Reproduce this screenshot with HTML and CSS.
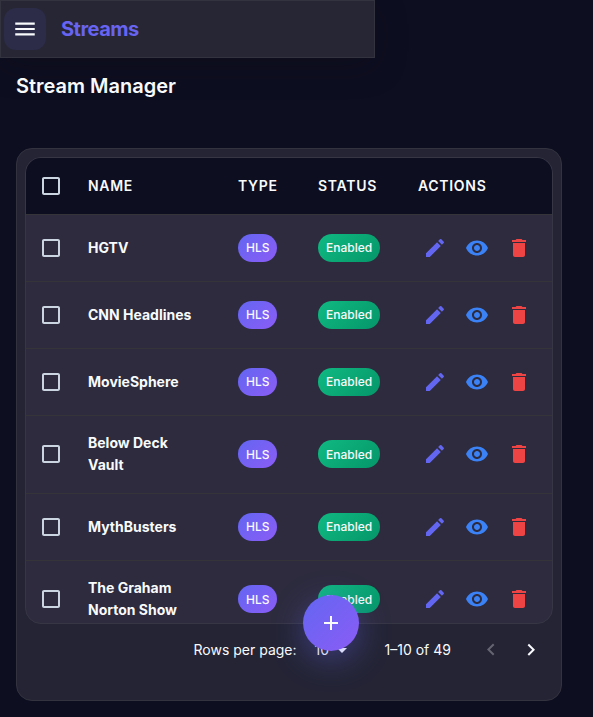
FILE: index.html
```html
<!DOCTYPE html>
<html lang="en">
<head>
<meta charset="utf-8">
<title>Stream Manager</title>
<link rel="stylesheet" href="styles.css">
</head>
<body>
<svg class="defs" aria-hidden="true">
  <symbol id="menu" viewBox="0 0 24 24"><path d="M3 18h18v-2H3zm0-5h18v-2H3zm0-7v2h18V6z"/></symbol>
  <symbol id="box" viewBox="0 0 24 24"><path d="M19 5v14H5V5h14m0-2H5c-1.100 0-2 .9-2 2v14c0 1.100.9 2 2 2h14c1.100 0 2-.9 2-2V5c0-1.100-.9-2-2-2z"/></symbol>
  <symbol id="edit" viewBox="0 0 24 24"><path d="M3 17.250V21h3.750L17.810 9.940l-3.750-3.750zM20.710 7.040c.39-.39.39-1.020 0-1.410l-2.340-2.340a.996.996 0 0 0-1.410 0l-1.830 1.830 3.750 3.750z"/></symbol>
  <symbol id="eye" viewBox="0 0 24 24"><path d="M12 4.500C7 4.500 2.730 7.610 1 12c1.730 4.390 6 7.500 11 7.500s9.270-3.110 11-7.500c-1.730-4.390-6-7.500-11-7.500M12 17c-2.760 0-5-2.240-5-5s2.240-5 5-5 5 2.240 5 5-2.240 5-5 5m0-8c-1.660 0-3 1.340-3 3s1.340 3 3 3 3-1.340 3-3-1.340-3-3-3"/></symbol>
  <symbol id="trash" viewBox="0 0 24 24"><path d="M6 19c0 1.100.9 2 2 2h8c1.100 0 2-.9 2-2V7H6zM19 4h-3.500l-1-1h-5l-1 1H5v2h14z"/></symbol>
  <symbol id="left" viewBox="0 0 24 24"><path d="M15.410 16.090l-4.580-4.590 4.580-4.590L14 5.500l-6 6 6 6z"/></symbol>
  <symbol id="right" viewBox="0 0 24 24"><path d="M8.590 16.340l4.580-4.590-4.580-4.590L10 5.750l6 6-6 6z"/></symbol>
  <symbol id="down" viewBox="0 0 24 24"><path d="M7 10l5 5 5-5z"/></symbol>
  <symbol id="add" viewBox="0 0 24 24"><path d="M19 13h-6v6h-2v-6H5v-2h6V5h2v6h6z"/></symbol>
</svg>
<header class="appbar">
  <button class="menu" aria-label="Menu"><svg class="icon"><use href="#menu"/></svg></button>
  <span class="brand">Streams</span>
</header>
<main>
  <h1>Stream Manager</h1>
  <section class="card">
    <div class="table">
      <div class="row head"><svg class="icon check"><use href="#box"/></svg><span>NAME</span><span>TYPE</span><span>STATUS</span><span>ACTIONS</span></div>
      <div class="row"><svg class="icon check"><use href="#box"/></svg><b>HGTV</b><span class="chip">HLS</span><span class="chip on">Enabled</span><div class="actions"><svg class="icon edit"><use href="#edit"/></svg><svg class="icon eye"><use href="#eye"/></svg><svg class="icon trash"><use href="#trash"/></svg></div></div>
      <div class="row"><svg class="icon check"><use href="#box"/></svg><b>CNN Headlines</b><span class="chip">HLS</span><span class="chip on">Enabled</span><div class="actions"><svg class="icon edit"><use href="#edit"/></svg><svg class="icon eye"><use href="#eye"/></svg><svg class="icon trash"><use href="#trash"/></svg></div></div>
      <div class="row"><svg class="icon check"><use href="#box"/></svg><b>MovieSphere</b><span class="chip">HLS</span><span class="chip on">Enabled</span><div class="actions"><svg class="icon edit"><use href="#edit"/></svg><svg class="icon eye"><use href="#eye"/></svg><svg class="icon trash"><use href="#trash"/></svg></div></div>
      <div class="row tall"><svg class="icon check"><use href="#box"/></svg><b>Below Deck<br>Vault</b><span class="chip">HLS</span><span class="chip on">Enabled</span><div class="actions"><svg class="icon edit"><use href="#edit"/></svg><svg class="icon eye"><use href="#eye"/></svg><svg class="icon trash"><use href="#trash"/></svg></div></div>
      <div class="row"><svg class="icon check"><use href="#box"/></svg><b>MythBusters</b><span class="chip">HLS</span><span class="chip on">Enabled</span><div class="actions"><svg class="icon edit"><use href="#edit"/></svg><svg class="icon eye"><use href="#eye"/></svg><svg class="icon trash"><use href="#trash"/></svg></div></div>
      <div class="row tall"><svg class="icon check"><use href="#box"/></svg><b>The Graham<br>Norton Show</b><span class="chip">HLS</span><span class="chip on">Enabled</span><div class="actions"><svg class="icon edit"><use href="#edit"/></svg><svg class="icon eye"><use href="#eye"/></svg><svg class="icon trash"><use href="#trash"/></svg></div></div>
    </div>
    <div class="pager">
      <span class="label">Rows per page:</span>
      <span class="label count">10</span>
      <svg class="icon"><use href="#down"/></svg>
      <span class="label range">1–10 of 49</span>
      <svg class="icon prev"><use href="#left"/></svg>
      <svg class="icon next"><use href="#right"/></svg>
    </div>
  </section>
</main>
<button class="fab" aria-label="Add stream"><svg class="icon"><use href="#add"/></svg></button>
</body>
</html>
```
FILE: styles.css
```css
* { box-sizing: border-box; }
body {
  margin: 0;
  height: 717px;
  overflow: hidden;
  background: #0d0e20;
  color: #f8fafc;
  font-family: Inter, "Liberation Sans", sans-serif;
  font-size: 14px;
}
.defs { display: none; }
.icon { display: block; width: 24px; height: 24px; fill: currentColor; flex: none; }
button { border: 0; padding: 0; color: inherit; display: flex; align-items: center; justify-content: center; }
.appbar {
  width: 375px;
  height: 58px;
  display: flex;
  align-items: center;
  gap: 15px;
  padding-left: 3px;
  background: #272635;
  border: 1px solid #33323f;
  box-shadow: 0 8px 32px rgba(15, 12, 20, .3);
}
.menu { width: 42px; height: 42px; border-radius: 12px; background: #2c2c49; }
.menu .icon { width: 26px; height: 26px; }
.brand { color: #6864f2; font-size: 20px; font-weight: 700; letter-spacing: -.5px; }
main { padding: 12px 31px 0 16px; }
h1 { margin: 0 0 46px; font-size: 20px; line-height: 32px; font-weight: 600; }
.card {
  height: 553px;
  padding: 8px;
  background: #242435;
  border: 1px solid #33333f;
  border-radius: 16px;
}
.table {
  height: 467px;
  overflow: hidden;
  background: #2d2b3d;
  border: 1px solid #373645;
  border-radius: 16px;
}
.row {
  display: grid;
  grid-template-columns: 62px 150px 80px 100px 1fr;
  align-items: center;
  height: 67px;
  border-bottom: 1px solid #353539;
}
.tall { height: 78px; padding-bottom: 1px; }
.head { height: 57px; background: #0d0e20; font-weight: 600; letter-spacing: .7px; }
.head span { line-height: 18px; padding-bottom: 1px; }
.check { margin-left: 13px; color: #cbd5e1; }
.row b { font-weight: 700; line-height: 22px; }
.chip {
  justify-self: start;
  height: 28px;
  padding: 0 8px;
  border-radius: 14px;
  font-size: 12px;
  line-height: 28px;
  font-weight: 500;
  background: linear-gradient(135deg, #6366f1, #8b5cf6);
}
.on { background: linear-gradient(135deg, #10b981, #059669); }
.tall .chip { line-height: 29px; }
.actions { display: flex; gap: 18px; padding-left: 5px; }
.edit { color: #6366f1; }
.eye { color: #3b82f6; }
.trash { color: #ef4444; }
.pager { display: flex; align-items: center; height: 52px; padding-left: 168.500px; }
.label { line-height: 20px; }
.count { margin-left: 18px; width: 16px; }
.pager .count + .icon { margin-left: -1px; }
.range { margin-left: 31px; width: 67px; white-space: nowrap; }
.prev { margin-left: 27.500px; opacity: .3; }
.next { margin-left: 16px; }
.fab {
  position: absolute;
  left: 303px;
  top: 595px;
  width: 56px;
  height: 56px;
  border-radius: 50%;
  background: linear-gradient(135deg, #6366f1, #8b5cf6);
  box-shadow: 0 8px 32px rgba(99, 102, 241, .4);
}
```
